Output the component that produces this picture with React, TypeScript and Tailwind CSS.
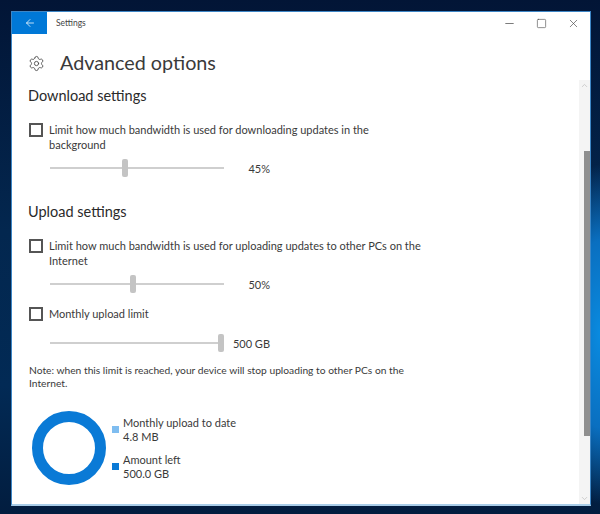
import { ArrowLeft, Settings, Minus, Square, X, ChevronUp, ChevronDown } from 'lucide-react';

const font = { label: 'text-[11px] leading-[15px] text-[#3a3a3a]' };

const Check = ({ lines, className }: { lines: string[]; className?: string }) => (
  <div className={`flex items-start ${className ?? ''}`}>
    <div className="w-[14px] h-[14px] mt-[1px] shrink-0 border-2 border-[#555] bg-white"></div>
    <div className={`ml-[6px] ${font.label}`}>
      {lines.map((line) => (
        <div key={line} className="whitespace-nowrap">
          {line}
        </div>
      ))}
    </div>
  </div>
);

const Slider = ({ pos, value, className }: { pos: number; value: string; className?: string }) => (
  <div className={`flex items-center h-[18px] ml-[22px] w-[220px] ${className ?? ''}`}>
    <div className="relative w-[174px] h-[2px] bg-[#cfcfcf] shrink-0">
      <div
        className="absolute top-[-8px] w-[6px] h-[18px] rounded-[2px] bg-[#c4c4c4]"
        style={{ left: `${pos}px` }}
      ></div>
    </div>
    <div className={`flex-1 text-right ${font.label}`}>{value}</div>
  </div>
);

const Legend = ({ color, name, value, className }: { color: string; name: string; value: string; className?: string }) => (
  <div className={`flex items-center ${className ?? ''}`}>
    <div className={`w-[7px] h-[7px] ${color}`}></div>
    <div className="ml-[4px] text-[11px] leading-[14px] text-[#3a3a3a] whitespace-nowrap">
      <div>{name}</div>
      <div>{value}</div>
    </div>
  </div>
);

const App = () => {
  return (
    <div
      className="w-[600px] h-[514px] overflow-hidden pl-[11px] pr-[9px] pt-[11px] bg-[radial-gradient(ellipse_50px_170px_at_100%_65%,#0a8be0_0%,#0a6fc0_55%,transparent_100%),linear-gradient(180deg,#021536_0%,#03274f_45%,#022a55_75%,#021d3f_100%)]"
      style={{ fontFamily: 'Lato, "Open Sans", sans-serif' }}
    >
      <div className="w-[580px] h-[495px] flex flex-col bg-white border border-[#3d86c6] border-b-2 border-b-[#a9cde8]">
        <div className="flex items-center h-[22px] shrink-0">
          <div className="w-[35px] h-full bg-[#0078d7] flex items-center justify-center">
            <ArrowLeft size={12} color="#fff" strokeWidth={1.5} />
          </div>
          <div className="ml-[9px] text-[8.5px] text-[#444]">Settings</div>
          <div className="ml-auto flex items-center text-[#444]">
            <Minus size={13} strokeWidth={1.3} className="mr-[20px]" />
            <Square size={11} strokeWidth={1.3} className="mr-[20px]" />
            <X size={13} strokeWidth={1.2} className="mr-[10px]" />
          </div>
        </div>

        <div className="flex flex-1 min-h-0">
          <div className="flex-1 pl-[16px]">
            <div className="flex items-center h-[32px] mt-[13px]">
              <Settings size={17} strokeWidth={1.2} className="text-[#444]" />
              <div className="ml-[15px] text-[19.75px] leading-none text-[#3a3a3a]">Advanced options</div>
            </div>
            <div className="mt-[7px] text-[14.5px] leading-[20px] text-[#2a2a2a]">Download settings</div>
            <Check className="mt-[16px] ml-[1px]" lines={['Limit how much bandwidth is used for downloading updates in the', 'background']} />
            <Slider className="mt-[7px]" pos={72} value="45%" />

            <div className="mt-[25px] text-[14.5px] leading-[20px] text-[#2a2a2a]">Upload settings</div>
            <Check className="mt-[16px] ml-[1px]" lines={['Limit how much bandwidth is used for uploading updates to other PCs on the', 'Internet']} />
            <Slider className="mt-[7px]" pos={80} value="50%" />
            <Check className="mt-[13px] ml-[1px]" lines={['Monthly upload limit']} />
            <Slider className="mt-[13px]" pos={168} value="500 GB" />

            <div className="mt-[12px] ml-[1px] text-[10.25px] leading-[13px] text-[#3a3a3a] whitespace-nowrap">
              <div>Note: when this limit is reached, your device will stop uploading to other PCs on the</div>
              <div>Internet.</div>
            </div>

            <div className="flex items-center mt-[21px] ml-[4px]">
              <div className="w-[74px] h-[74px] rounded-full border-[11px] border-[#0a7ad6] bg-white shrink-0"></div>
              <div className="ml-[6px]">
                <Legend color="bg-[#7fbdf0]" name="Monthly upload to date" value="4.8 MB" />
                <Legend className="mt-[9px]" color="bg-[#0a7ad6]" name="Amount left" value="500.0 GB" />
              </div>
            </div>
          </div>

          <div className="w-[11px] mt-[46px] bg-[#f4f4f4] flex flex-col items-center">
            <ChevronUp size={9} className="text-[#c0c0c0] mt-[1px]" />
            <div className="self-end w-[6px] h-[285px] mt-[61px] bg-[#8f8f8f]"></div>
            <ChevronDown size={9} className="text-[#c0c0c0] mt-auto mb-[1px]" />
          </div>
        </div>
      </div>
    </div>
  );
};

export default App;
